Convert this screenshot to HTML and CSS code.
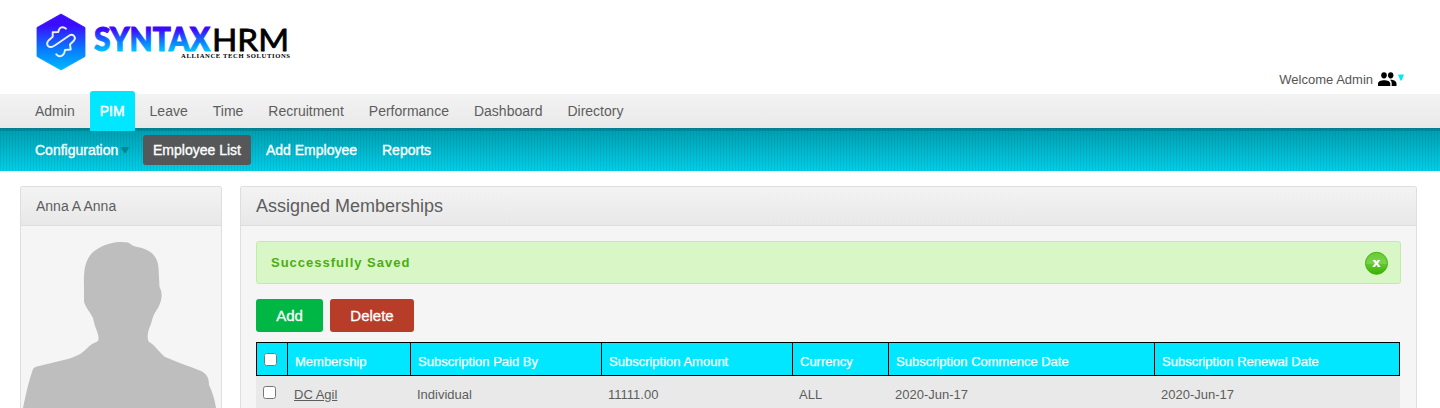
FILE: index.html
```html
<!DOCTYPE html>
<html lang="en">
<head>
<meta charset="utf-8">
<title>SyntaxHRM</title>
<link rel="stylesheet" href="styles.css">
</head>
<body>
<header class="header">
  <svg class="logo" width="260" height="64" viewBox="34 10 260 64" role="img" aria-label="SyntaxHRM">
    <defs>
      <linearGradient id="hex" x1="0" y1="0" x2="0" y2="1"><stop offset=".2" stop-color="#3b0cff"/><stop offset=".62" stop-color="#0878ff"/><stop offset="1" stop-color="#00baff"/></linearGradient>
      <linearGradient id="word" gradientUnits="userSpaceOnUse" x1="0" y1="27" x2="0" y2="52"><stop offset=".1" stop-color="#3d08ff"/><stop offset=".6" stop-color="#0a80ff"/><stop offset="1" stop-color="#00c8ff"/></linearGradient>
    </defs>
    <path d="M61 14 85 27.5V56.500L61 70 37 56.500V27.500Z" fill="url(#hex)" stroke="url(#hex)" stroke-width=".8" stroke-linejoin="round"/>
    <path d="M66 28.700C63 26 59 27 58.300 32L52.700 32.300V36.700L48.500 40.500C45.500 44 48 48 52 46.800Q54 46 55.500 45L69 35.800C73 33 76.500 37.500 74 40.500L70 44.500 70.700 49.500 65 50C64.500 55.500 60 58.500 56.300 54.300" fill="none" stroke="#e8f3ff" stroke-width="1.900" stroke-linecap="round" stroke-linejoin="round"/>
    <text class="logo-bold" x="94" y="50.700" textLength="116" lengthAdjust="spacingAndGlyphs" fill="url(#word)" stroke="url(#word)">SYNTAX</text>
    <text class="logo-light" x="212" y="50.700" textLength="77" lengthAdjust="spacingAndGlyphs">HRM</text>
    <text class="logo-tag" x="181" y="58" textLength="109" lengthAdjust="spacing">ALLIANCE TECH SOLUTIONS</text>
  </svg>
  <div class="welcome">
    <span>Welcome Admin</span>
    <svg class="people" width="19" height="15" viewBox="0 0 19 15"><ellipse cx="6" cy="3.300" rx="2.800" ry="3.100"/><ellipse cx="12.700" cy="3.300" rx="2.700" ry="3.100"/><path d="M0 14V11.500C0 7 12.300 7 12.300 11.500V14ZM12 7.800C15 7.500 18.500 9 18.500 11.500V14H13.700V11.300C13.700 9.800 13 8.600 12 7.800Z"/></svg>
    <svg class="caret" width="6" height="7" viewBox="0 0 6 7"><path d="M0 .5H6L3.600 6.500H2.400Z" fill="#00e7ff"/></svg>
  </div>
</header>
<nav class="menu">
  <a>Admin</a><a class="current">PIM</a><a>Leave</a><a>Time</a><a>Recruitment</a><a>Performance</a><a>Dashboard</a><a>Directory</a>
</nav>
<nav class="submenu">
  <a class="has-arrow">Configuration<svg width="8" height="6" viewBox="0 0 8 6"><path d="M.5 0H7.500V2L4.500 6H3.500L.5 2Z" fill="#058698"/></svg></a><a class="selected">Employee List</a><a>Add Employee</a><a>Reports</a>
</nav>
<main class="content">
  <aside class="panel profile">
    <h1 class="name">Anna A Anna</h1>
    <svg class="avatar" width="200" height="182" viewBox="21 226 200 182"><path d="M23 408C26 393 29 380 33 369Q34 367 37 366.500L68 359C81 355 83 352 90 345.500C94 342 99 342 98.500 339C99 333 95 329 93 318C90 312 86 308 84 302V287C83 263 88 254 99 248C109 242 121 241 128 242.500C131 244 132 246 137 247C151 249 158 257 158.500 268L159.500 287C163 293 162 301 158 308C154 314 153 316 151 324C147 332 147 339 149 342C155 345 158 351 165 357C179 363 189 366 201 371C207 374 209 378 209 385C212 391 215 400 216 408Z" fill="#bebebe"/></svg>
  </aside>
  <section class="panel memberships">
    <h1>Assigned Memberships</h1>
    <div class="inner">
      <div class="message">Successfully Saved
        <svg width="24" height="24" viewBox="0 0 24 24"><defs><linearGradient id="close" x1="0" y1="0" x2="0" y2="1"><stop offset="0" stop-color="#69cb35"/><stop offset=".5" stop-color="#78d44b"/><stop offset=".55" stop-color="#5fc72d"/><stop offset="1" stop-color="#35b300"/></linearGradient></defs><circle cx="12.500" cy="12.300" r="11" fill="url(#close)" stroke="#43b315"/><path d="M8.500 9H11.300L12.500 10.800 13.700 9H16.300L13.900 12.200 16.700 16H13.800L12.400 13.800 11 16H8.200L11 12.200Z" fill="#fff"/></svg>
      </div>
      <div class="actions"><button class="add">Add</button><button class="delete">Delete</button></div>
      <table>
        <colgroup><col class="c1"><col class="c2"><col class="c3"><col class="c4"><col class="c5"><col class="c6"><col class="c7"></colgroup>
        <thead><tr><th><input type="checkbox" aria-label="Select all"></th><th>Membership</th><th>Subscription Paid By</th><th>Subscription Amount</th><th>Currency</th><th>Subscription Commence Date</th><th>Subscription Renewal Date</th></tr></thead>
        <tbody><tr><td><input type="checkbox" aria-label="Select row"></td><td><a>DC Agil</a></td><td>Individual</td><td>11111.00</td><td>ALL</td><td>2020-Jun-17</td><td>2020-Jun-17</td></tr></tbody>
      </table>
    </div>
  </section>
</main>
</body>
</html>
```
FILE: styles.css
```css
* { box-sizing: border-box; }
html { overflow: hidden; }
body { margin: 0; height: 408px; overflow: hidden; background: #fff; color: #5d5d5d; font: 13px "Liberation Sans", Arial, sans-serif; }
.header { display: flex; justify-content: space-between; height: 94px; padding: 10px 36px 0 34px; }
.logo-bold { font: 900 31.5px Lato, sans-serif; stroke-width: 1px; }
.logo-light { font: 400 31.5px Lato, sans-serif; stroke: #000; stroke-width: .8px; }
.logo-tag { font: bold 6.6px "Liberation Serif", serif; }
.welcome { display: flex; align-items: center; height: 18px; margin-top: 60px; color: #555; }
.people { margin: 0 1px 0 5px; }
.caret { margin-bottom: 3px; }
.menu { display: flex; align-items: flex-end; gap: 5px; height: 37px; padding-left: 25px; background: linear-gradient(#f3f3f3, #e9e9e9 34px, #007f8f 34px, #008a9b); font-size: 14px; }
.menu a { height: 40px; padding: 0 10px; line-height: 40px; flex: none; }
.menu .current { border-radius: 3px 3px 0 0; background: #00e7ff; color: #fff; -webkit-text-stroke: .5px #fff; }
.submenu { display: flex; gap: 5px; height: 40px; padding: 4px 0 0 25px; color: #fff; font-size: 14px; -webkit-text-stroke: .35px #fff; background: repeating-linear-gradient(90deg, rgba(0, 80, 100, .13) 0 1px, transparent 1px 3px), linear-gradient(#00a0b2, #00cfe8); }
.submenu a { height: 30px; padding: 0 10px; line-height: 30px; border-radius: 3px; }
.submenu .selected { background: #555759; }
.submenu .has-arrow { width: 113px; white-space: nowrap; }
.has-arrow svg { margin: 0 0 2px 3px; }
.content { display: flex; align-items: flex-start; gap: 18px; height: 237px; padding: 15px 0 0 20px; overflow: hidden; }
.panel { height: 222px; border: 1px solid #dedede; border-bottom: 0; border-radius: 3px 3px 0 0; background: #f5f5f5; overflow: hidden; }
.panel h1 { height: 39px; margin: 0; padding-left: 15px; border-bottom: 1px solid #dedede; background: linear-gradient(#f3f3f3, #e8e8e8); font-size: 18px; font-weight: normal; line-height: 39px; }
.panel .name { font-size: 14px; }
.profile { width: 202px; }
.avatar { display: block; }
.memberships { width: 1177px; }
.inner { padding: 15px; }
.message { display: flex; align-items: center; justify-content: space-between; height: 43px; padding: 0 12px 0 14px; border: 1px solid #bdeea4; border-radius: 3px; background: #d9f6c7; color: #4cad10; font-weight: bold; letter-spacing: 1px; }
.actions { display: flex; gap: 7px; margin: 15px 0 10px; }
.actions button { width: 67px; height: 33px; padding: 0; border: 0; border-radius: 3px; color: #fff; font: 15px "Liberation Sans", Arial, sans-serif; -webkit-text-stroke: .3px #fff; }
.actions .add { background: #00b746; }
.actions .delete { width: 84px; background: #b73d29; }
table { width: 1143px; table-layout: fixed; border-collapse: collapse; background: #e9e9e9; }
.c1 { width: 31px; } .c2 { width: 123px; } .c3 { width: 191px; } .c4 { width: 191px; } .c5 { width: 96px; } .c6 { width: 266px; } .c7 { width: 245px; }
th { height: 33px; padding: 4px 0 0 7px; border: 1px solid #000; background: #00e7ff; color: #fff; font-weight: normal; text-align: left; -webkit-text-stroke: .25px #fff; }
td { height: 37px; padding: 0 0 0 6.5px; }
td a { text-decoration: underline; }
input { display: block; width: 13px; height: 13px; margin: 0; }
th input { margin-top: -4px; }
td input { margin-top: -3px; }
```
